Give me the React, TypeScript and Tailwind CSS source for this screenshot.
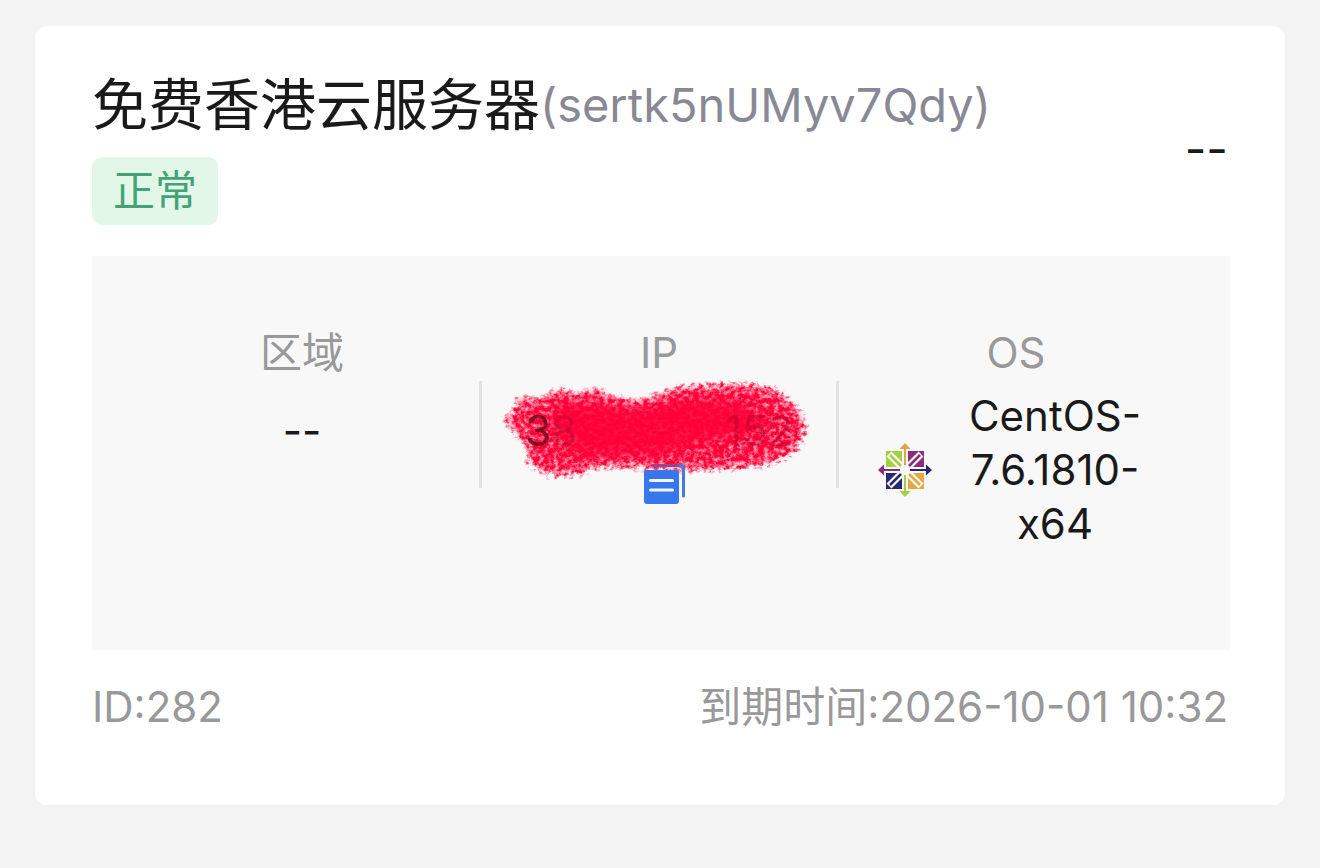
import React from "react";

function CentosLogo() {
  return (
    <svg viewBox="0 0 54 54" className="size-[54px] shrink-0" role="img" aria-label="CentOS">
      <path d="M8 8h17v17H8z" fill="#a2d040" />
      <path d="M29 8h17v17H29z" fill="#8d2c7c" />
      <path d="M8 29h17v17H8z" fill="#262a72" />
      <path d="M29 29h17v17H29z" fill="#e8a840" />
      <path d="M11 11l32 32M43 11L11 43" stroke="#f8f8f8" strokeWidth="7" />
      <path d="M27 7v40M7 27h40" stroke="#f8f8f8" strokeWidth="6" />
      <g strokeWidth="2.500">
        <path d="M12 12l11 11" stroke="#a2d040" />
        <path d="M42 12L31 23" stroke="#8d2c7c" />
        <path d="M12 42l11-11" stroke="#262a72" />
        <path d="M42 42L31 31" stroke="#e8a840" />
      </g>
      <circle cx="27" cy="27" r="4.500" fill="#f8f8f8" />
      <path d="M27 0l5.500 6h-4.500v16h-2V6h-4.500z" fill="#e0a545" />
      <path d="M54 27l-6 5.500v-4.500H32v-2h16v-4.500z" fill="#262a72" />
      <path d="M27 54l-5.500-6h4.500V32h2v16h4.500z" fill="#a2d040" />
      <path d="M0 27l6-5.500v4.500h16v2H6v4.500z" fill="#8d2c7c" />
    </svg>
  );
}

function CopyIcon() {
  return (
    <svg viewBox="0 0 42 40" className="h-10 w-[42px]" aria-hidden="true">
      <path d="M9 1.500h27a3.500 3.500 0 0 1 3.500 3.500v27" fill="none" stroke="#4779dd" strokeWidth="3" strokeLinecap="round" />
      <rect x="0" y="6" width="35" height="34" rx="3" fill="#3776ec" />
      <path d="M6.500 16.500h22M6.500 26h22" stroke="#f1f7ff" strokeWidth="3" strokeLinecap="round" />
      <path d="M8 1.500h27" stroke="#ff0037" strokeWidth="3" opacity=".45" />
    </svg>
  );
}

function Scribble() {
  return (
    <svg viewBox="0 0 330 110" className="h-[110px] w-[330px]" aria-hidden="true">
      <defs>
        <filter id="crayon" x="-5%" y="-15%" width="110%" height="130%" colorInterpolationFilters="sRGB">
          <feTurbulence type="fractalNoise" baseFrequency="0.2 0.24" numOctaves="4" seed="5" result="n" />
          <feColorMatrix in="n" type="matrix" values="0 0 0 0 0  0 0 0 0 0  0 0 0 0 0  1 0 0 0 0" result="noise" />
          <feGaussianBlur in="SourceAlpha" stdDeviation="8" result="soft" />
          <feComposite in="soft" in2="noise" operator="arithmetic" k2="0.9" k3="1.3" k4="-1.1" result="sum" />
          <feComponentTransfer in="sum" result="grain">
            <feFuncA type="linear" slope="1.900" />
          </feComponentTransfer>
          <feGaussianBlur in="SourceAlpha" stdDeviation="1" result="edge" />
          <feComposite in="grain" in2="edge" operator="in" result="cut" />
          <feFlood floodColor="#ff0037" />
          <feComposite in2="cut" operator="in" />
        </filter>
        <filter id="haze" x="-5%" y="-15%" width="110%" height="130%">
          <feGaussianBlur stdDeviation="2" />
        </filter>
        <filter id="core" x="-10%" y="-20%" width="120%" height="140%">
          <feGaussianBlur stdDeviation="6" />
        </filter>
      </defs>
      <path
        fill="#ff0037"
        opacity=".3"
        filter="url(#haze)"
        d="M10 45L22 38L24 24L45 26L65 16L84 22L101 15L120 24L143 28L162 22L184 14L220 12L260 12L284 18L296 29L308 42L309 52L303 70L292 81L270 89L230 93L180 94L140 90L104 90L82 97L54 97L35 86L34 74L26 62Z"
      />
      <path
        filter="url(#crayon)"
        d="M3 45L18 36L20 20L45 22L65 11L84 18L101 10L120 20L143 24L162 18L184 10L220 7L260 7L286 13L298 25L313 40L316 52L310 72L296 86L270 95L230 99L180 100L140 97L104 97L82 105L54 105L30 93L30 74L20 62Z"
      />
      <path
        filter="url(#core)"
        fill="#ff0037"
        opacity=".85"
        d="M60 28L100 30L150 35L190 25L245 28L270 40L260 60L205 68L160 82L120 82L84 80L62 56Z"
      />
    </svg>
  );
}

function Column({ label, children }: { label: string; children: React.ReactNode }) {
  return (
    <div className="flex min-w-0 flex-1 flex-col items-center">
      <dt className="text-[#999999]">{label}</dt>
      {children}
    </div>
  );
}

function Divider() {
  return <div className="-mx-px mt-[55px] h-[107px] w-[3px] shrink-0 bg-[#e1e1e1]" />;
}

export default function App() {
  return (
    <main className="min-h-screen bg-[#f3f3f3] px-[35px] pt-[26px] pb-[63px] font-['Inter','Noto_Sans_CJK_SC',sans-serif] text-[42px] leading-[54px] text-[#1a1a1a]">
      <article className="rounded-xl bg-white pt-[47px] pr-[55px] pb-[71px] pl-[57px]">
        <header className="flex items-center justify-between pr-0.5">
          <div className="flex flex-col items-start gap-5">
            <h1 className="flex items-center text-[47px] leading-[64px]">
              <span className="text-[56px]">免费香港云服务器</span>
              <span className="text-[#888994]">(sertk5nUMyv7Qdy)</span>
            </h1>
            <span className="rounded-[10px] bg-[#e2f7e8] px-[21px] py-[7px] text-[#42a377]">正常</span>
          </div>
          <span className="text-[47px]">--</span>
        </header>

        <dl className="mt-[31px] flex items-start bg-[#f8f8f8] pt-[70px] pr-9 pb-[99px] pl-8">
          <Column label="区域">
            <dd className="mt-6">--</dd>
          </Column>
          <Divider />
          <Column label="IP">
            <dd className="mt-6 flex flex-col items-center">
              <div className="relative flex w-[268px] justify-between">
                <div className="absolute -top-[30px] -left-[31px]">
                  <Scribble />
                </div>
                <span className="relative text-[#5a0a18]/75">
                  3<span className="text-[#a00020]/35">8</span>
                </span>
                <span className="relative text-[#8b0020]/35">152</span>
              </div>
              <button type="button" aria-label="复制 IP" className="relative mt-1.5 ml-3">
                <CopyIcon />
              </button>
            </dd>
          </Column>
          <Divider />
          <Column label="OS">
            <dd className="mt-[9px] flex w-full items-center pr-4 pl-10">
              <CentosLogo />
              <span className="flex-1 text-center">
                CentOS-
                <br />
                7.6.1810-
                <br />
                x64
              </span>
            </dd>
          </Column>
        </dl>

        <footer className="mt-[30px] flex justify-between pr-0.5 text-[#999999]">
          <span>ID:282</span>
          <span>到期时间:2026-10-01 10:32</span>
        </footer>
      </article>
    </main>
  );
}
